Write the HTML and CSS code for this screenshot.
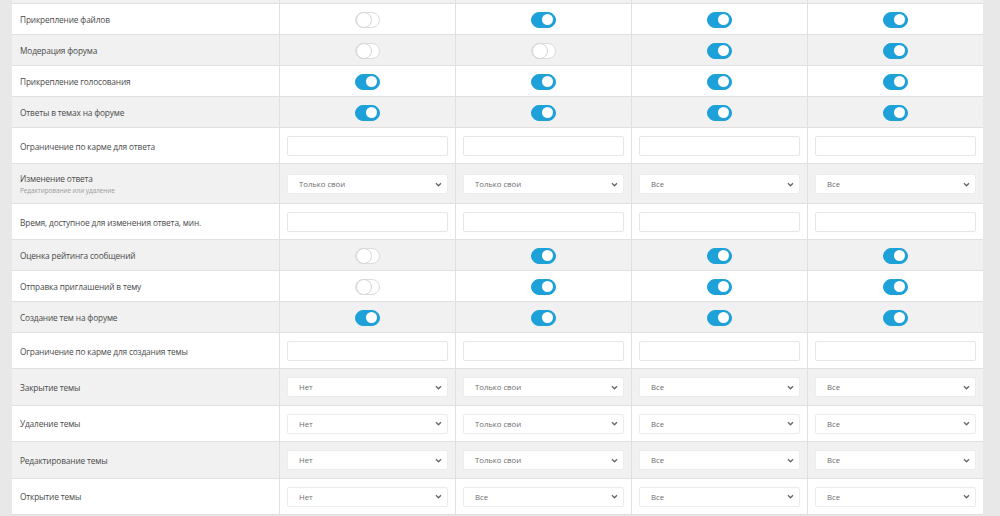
FILE: index.html
```html
<!DOCTYPE html>
<html lang="ru">
<head>
<meta charset="utf-8">
<title>Права доступа форума</title>
<link rel="stylesheet" href="styles.css">
</head>
<body>
<div class="page">
  <div class="perm-table">
    <div class="row row-toggle gray partial">
      <div class="label"></div>
      <div class="cell"></div>
      <div class="cell"></div>
      <div class="cell"></div>
      <div class="cell"></div>
    </div>
    <div class="row row-toggle">
      <div class="label">Прикрепление файлов</div>
      <div class="cell"><span class="toggle"></span></div>
      <div class="cell"><span class="toggle on"></span></div>
      <div class="cell"><span class="toggle on"></span></div>
      <div class="cell"><span class="toggle on"></span></div>
    </div>
    <div class="row row-toggle gray">
      <div class="label">Модерация форума</div>
      <div class="cell"><span class="toggle"></span></div>
      <div class="cell"><span class="toggle"></span></div>
      <div class="cell"><span class="toggle on"></span></div>
      <div class="cell"><span class="toggle on"></span></div>
    </div>
    <div class="row row-toggle">
      <div class="label">Прикрепление голосования</div>
      <div class="cell"><span class="toggle on"></span></div>
      <div class="cell"><span class="toggle on"></span></div>
      <div class="cell"><span class="toggle on"></span></div>
      <div class="cell"><span class="toggle on"></span></div>
    </div>
    <div class="row row-toggle gray">
      <div class="label">Ответы в темах на форуме</div>
      <div class="cell"><span class="toggle on"></span></div>
      <div class="cell"><span class="toggle on"></span></div>
      <div class="cell"><span class="toggle on"></span></div>
      <div class="cell"><span class="toggle on"></span></div>
    </div>
    <div class="row row-input">
      <div class="label">Ограничение по карме для ответа</div>
      <div class="cell"><input class="field" type="text"></div>
      <div class="cell"><input class="field" type="text"></div>
      <div class="cell"><input class="field" type="text"></div>
      <div class="cell"><input class="field" type="text"></div>
    </div>
    <div class="row row-tall gray">
      <div class="label">
        <div>Изменение ответа</div>
        <div class="hint">Редактирование или удаление</div>
      </div>
      <div class="cell"><div class="select"><span>Только свои</span><svg viewBox="0 0 8 6" class="chev"><path d="M1 1.5 L4 4.5 L7 1.5"/></svg></div></div>
      <div class="cell"><div class="select"><span>Только свои</span><svg viewBox="0 0 8 6" class="chev"><path d="M1 1.5 L4 4.5 L7 1.5"/></svg></div></div>
      <div class="cell"><div class="select"><span>Все</span><svg viewBox="0 0 8 6" class="chev"><path d="M1 1.5 L4 4.5 L7 1.5"/></svg></div></div>
      <div class="cell"><div class="select"><span>Все</span><svg viewBox="0 0 8 6" class="chev"><path d="M1 1.5 L4 4.5 L7 1.5"/></svg></div></div>
    </div>
    <div class="row row-input">
      <div class="label">Время, доступное для изменения ответа, мин.</div>
      <div class="cell"><input class="field" type="text"></div>
      <div class="cell"><input class="field" type="text"></div>
      <div class="cell"><input class="field" type="text"></div>
      <div class="cell"><input class="field" type="text"></div>
    </div>
    <div class="row row-toggle gray">
      <div class="label">Оценка рейтинга сообщений</div>
      <div class="cell"><span class="toggle"></span></div>
      <div class="cell"><span class="toggle on"></span></div>
      <div class="cell"><span class="toggle on"></span></div>
      <div class="cell"><span class="toggle on"></span></div>
    </div>
    <div class="row row-toggle">
      <div class="label">Отправка приглашений в тему</div>
      <div class="cell"><span class="toggle"></span></div>
      <div class="cell"><span class="toggle on"></span></div>
      <div class="cell"><span class="toggle on"></span></div>
      <div class="cell"><span class="toggle on"></span></div>
    </div>
    <div class="row row-toggle gray">
      <div class="label">Создание тем на форуме</div>
      <div class="cell"><span class="toggle on"></span></div>
      <div class="cell"><span class="toggle on"></span></div>
      <div class="cell"><span class="toggle on"></span></div>
      <div class="cell"><span class="toggle on"></span></div>
    </div>
    <div class="row row-input">
      <div class="label">Ограничение по карме для создания темы</div>
      <div class="cell"><input class="field" type="text"></div>
      <div class="cell"><input class="field" type="text"></div>
      <div class="cell"><input class="field" type="text"></div>
      <div class="cell"><input class="field" type="text"></div>
    </div>
    <div class="row row-select gray">
      <div class="label">Закрытие темы</div>
      <div class="cell"><div class="select"><span>Нет</span><svg viewBox="0 0 8 6" class="chev"><path d="M1 1.5 L4 4.5 L7 1.5"/></svg></div></div>
      <div class="cell"><div class="select"><span>Только свои</span><svg viewBox="0 0 8 6" class="chev"><path d="M1 1.5 L4 4.5 L7 1.5"/></svg></div></div>
      <div class="cell"><div class="select"><span>Все</span><svg viewBox="0 0 8 6" class="chev"><path d="M1 1.5 L4 4.5 L7 1.5"/></svg></div></div>
      <div class="cell"><div class="select"><span>Все</span><svg viewBox="0 0 8 6" class="chev"><path d="M1 1.5 L4 4.5 L7 1.5"/></svg></div></div>
    </div>
    <div class="row row-select">
      <div class="label">Удаление темы</div>
      <div class="cell"><div class="select"><span>Нет</span><svg viewBox="0 0 8 6" class="chev"><path d="M1 1.5 L4 4.5 L7 1.5"/></svg></div></div>
      <div class="cell"><div class="select"><span>Только свои</span><svg viewBox="0 0 8 6" class="chev"><path d="M1 1.5 L4 4.5 L7 1.5"/></svg></div></div>
      <div class="cell"><div class="select"><span>Все</span><svg viewBox="0 0 8 6" class="chev"><path d="M1 1.5 L4 4.5 L7 1.5"/></svg></div></div>
      <div class="cell"><div class="select"><span>Все</span><svg viewBox="0 0 8 6" class="chev"><path d="M1 1.5 L4 4.5 L7 1.5"/></svg></div></div>
    </div>
    <div class="row row-select gray">
      <div class="label">Редактирование темы</div>
      <div class="cell"><div class="select"><span>Нет</span><svg viewBox="0 0 8 6" class="chev"><path d="M1 1.5 L4 4.5 L7 1.5"/></svg></div></div>
      <div class="cell"><div class="select"><span>Только свои</span><svg viewBox="0 0 8 6" class="chev"><path d="M1 1.5 L4 4.5 L7 1.5"/></svg></div></div>
      <div class="cell"><div class="select"><span>Все</span><svg viewBox="0 0 8 6" class="chev"><path d="M1 1.5 L4 4.5 L7 1.5"/></svg></div></div>
      <div class="cell"><div class="select"><span>Все</span><svg viewBox="0 0 8 6" class="chev"><path d="M1 1.5 L4 4.5 L7 1.5"/></svg></div></div>
    </div>
    <div class="row row-select">
      <div class="label">Открытие темы</div>
      <div class="cell"><div class="select"><span>Нет</span><svg viewBox="0 0 8 6" class="chev"><path d="M1 1.5 L4 4.5 L7 1.5"/></svg></div></div>
      <div class="cell"><div class="select"><span>Все</span><svg viewBox="0 0 8 6" class="chev"><path d="M1 1.5 L4 4.5 L7 1.5"/></svg></div></div>
      <div class="cell"><div class="select"><span>Все</span><svg viewBox="0 0 8 6" class="chev"><path d="M1 1.5 L4 4.5 L7 1.5"/></svg></div></div>
      <div class="cell"><div class="select"><span>Все</span><svg viewBox="0 0 8 6" class="chev"><path d="M1 1.5 L4 4.5 L7 1.5"/></svg></div></div>
    </div>
  </div>
</div>
</body>
</html>
```

FILE: styles.css
```css
* { box-sizing: border-box; }

html, body {
  margin: 0;
  padding: 0;
  background: #e8e8e8;
  font-family: "Open Sans", "Noto Sans", sans-serif;
  color: #444;
}

.page {
  padding-left: 12px;
  height: 516px;
  overflow: hidden;
}

.perm-table {
  width: 971px;
  background: #fff;
}

.row {
  display: grid;
  grid-template-columns: 267px repeat(4, 176px);
  border-bottom: 1px solid #e0e0e0;
  background: #fff;
}

.row.gray { background: #f1f1f1; }

.row.partial { margin-top: -27px; }

.row-toggle { height: 31px; }
.row-input { height: 36px; }
.row-tall { height: 40px; }
.row-select { height: 36.5px; }

.label {
  display: flex;
  flex-direction: column;
  justify-content: center;
  padding: 2px 0 0 8px;
  font-size: 8.3px;
  letter-spacing: -0.15px;
  line-height: 12px;
  color: #4a4a4a;
}

.hint {
  font-size: 6.4px;
  letter-spacing: -0.05px;
  line-height: 10px;
  margin-top: 1px;
  color: #9a9a9a;
}

.cell {
  border-left: 1px solid #e0e0e0;
  display: flex;
  align-items: center;
  justify-content: center;
  padding: 1px 7px 0 7px;
}

.toggle {
  width: 25px;
  height: 16px;
  border-radius: 8px;
  background: #fff;
  border: 1px solid #dcdcdc;
  display: flex;
  align-items: center;
  padding: 0;
}

.toggle::before {
  content: "";
  display: block;
  width: 14px;
  height: 14px;
  border-radius: 50%;
  border: 1px solid #d6d6d6;
  background: #fff;
}

.toggle.on {
  background: #1da1d8;
  border-color: #1da1d8;
  justify-content: flex-end;
  padding-right: 2px;
}

.toggle.on::before {
  width: 11px;
  height: 11px;
  border: none;
}

.field {
  display: block;
  width: 100%;
  height: 20px;
  margin: 0;
  border: 1px solid #e6e6e6;
  border-radius: 2px;
  background: #fff;
  outline: none;
}

.select {
  width: 100%;
  height: 20px;
  display: flex;
  align-items: center;
  justify-content: space-between;
  padding: 0 5px 0 11px;
  background: #fff;
  border: 1px solid #ececec;
  border-radius: 2px;
  font-size: 7.8px;
  letter-spacing: -0.05px;
  color: #6d6d6d;
}

.chev {
  width: 7px;
  height: 5px;
  fill: none;
  stroke: #666;
  stroke-width: 1.6;
}
```
